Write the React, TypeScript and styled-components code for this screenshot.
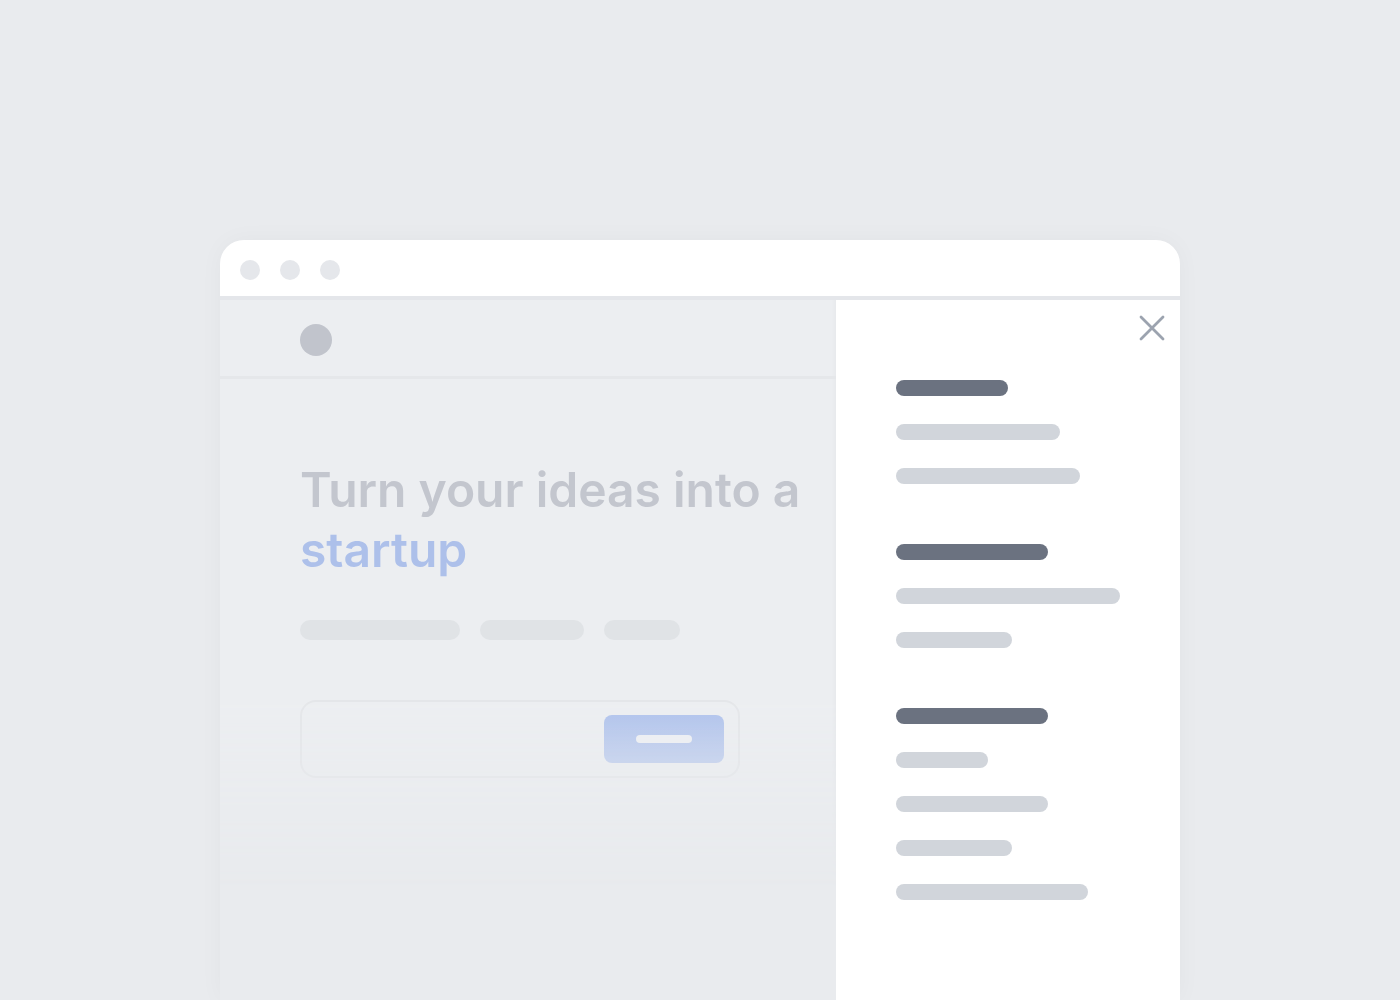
import React from 'react';
import styled, { createGlobalStyle } from 'styled-components';

const GlobalStyle = createGlobalStyle`
  html, body {
    margin: 0;
    padding: 0;
    background: #e9ebee;
    font-family: Inter, "Noto Sans", sans-serif;
    overflow: hidden;
  }
`;

const Page = styled.div`
  width: 1400px;
  height: 1000px;
  display: flex;
  justify-content: center;
  padding-top: 240px;
  box-sizing: border-box;
  overflow: hidden;
`;

const Window = styled.div`
  width: 960px;
  height: 760px;
  display: flex;
  flex-direction: column;
  border-radius: 24px 24px 0 0;
  box-shadow: 0 0 24px rgba(30, 40, 60, 0.035);
`;

const TitleBar = styled.div`
  height: 60px;
  box-sizing: border-box;
  flex-shrink: 0;
  background: #ffffff;
  border-radius: 24px 24px 0 0;
  border-bottom: 4px solid #e4e6ea;
  display: flex;
  align-items: center;
  gap: 20px;
  padding: 4px 0 0 20px;
`;

const Dot = styled.span`
  width: 20px;
  height: 20px;
  border-radius: 50%;
  background: #e5e7eb;
`;

const Body = styled.div`
  flex: 1;
  display: flex;
`;

const Main = styled.div`
  width: 616px;
  background: #eceef1;
  display: flex;
  flex-direction: column;
  -webkit-mask-image: linear-gradient(to bottom, #000 0, #000 400px, rgba(0, 0, 0, 0.35) 520px, transparent 590px);
  mask-image: linear-gradient(to bottom, #000 0, #000 400px, rgba(0, 0, 0, 0.35) 520px, transparent 590px);
  box-shadow: inset -4px 0 4px -3px rgba(0, 0, 0, 0.03);
`;

const Header = styled.div`
  height: 79px;
  box-sizing: border-box;
  border-bottom: 3px solid #e5e7ea;
  display: flex;
  align-items: center;
  padding: 4px 0 0 80px;
  flex-shrink: 0;
`;

const Avatar = styled.span`
  width: 32px;
  height: 32px;
  border-radius: 50%;
  background: #c1c4cc;
`;

const Hero = styled.div`
  padding: 81px 0 0 80px;
  display: flex;
  flex-direction: column;
`;

const Headline = styled.h1`
  margin: 0;
  font-size: 48px;
  line-height: 60px;
  font-weight: 600;
  letter-spacing: 0;
  color: #c3c6ce;
  white-space: nowrap;
`;

const Accent = styled.span`
  color: #adc0ea;
`;

const PillRow = styled.div`
  display: flex;
  gap: 20px;
  margin-top: 40px;
`;

const Pill = styled.span<{ $w: number }>`
  width: ${p => p.$w}px;
  height: 20px;
  border-radius: 10px;
  background: #e0e3e6;
`;

const InputBox = styled.div`
  margin-top: 60px;
  width: 440px;
  height: 78px;
  box-sizing: border-box;
  border: 2px solid #e4e6e9;
  border-radius: 16px;
  display: flex;
  align-items: center;
  justify-content: flex-end;
  padding-right: 14px;
`;

const SubmitButton = styled.div`
  width: 120px;
  height: 48px;
  border-radius: 8px;
  background: linear-gradient(to bottom, #afc2ec, #bacaed);
  display: flex;
  align-items: center;
  justify-content: center;
`;

const ButtonLabel = styled.span`
  width: 56px;
  height: 8px;
  border-radius: 4px;
  background: #eef0f4;
`;

const Drawer = styled.div`
  position: relative;
  width: 344px;
  background: #ffffff;
  padding: 80px 0 0 60px;
  box-sizing: border-box;
  display: flex;
  flex-direction: column;
  gap: 60px;
`;

const CloseButton = styled.button`
  position: absolute;
  top: 14px;
  right: 14px;
  width: 28px;
  height: 28px;
  padding: 0;
  border: none;
  background: none;
  display: flex;
  align-items: center;
  justify-content: center;
`;

const Group = styled.div`
  display: flex;
  flex-direction: column;
  gap: 28px;
`;

const Bar = styled.span<{ $w: number; $dark?: boolean }>`
  width: ${p => p.$w}px;
  height: 16px;
  border-radius: 8px;
  background: ${p => (p.$dark ? '#6b7280' : '#d1d5db')};
`;

const groups: { title: number; items: number[] }[] = [
  { title: 112, items: [164, 184] },
  { title: 152, items: [224, 116] },
  { title: 152, items: [92, 152, 116, 192] },
];

export default function App() {
  return (
    <>
      <GlobalStyle />
      <Page>
        <Window>
          <TitleBar>
            <Dot />
            <Dot />
            <Dot />
          </TitleBar>
          <Body>
            <Main>
              <Header>
                <Avatar />
              </Header>
              <Hero>
                <Headline>
                  Turn your ideas into a
                  <br />
                  <Accent>startup</Accent>
                </Headline>
                <PillRow>
                  <Pill $w={160} />
                  <Pill $w={104} />
                  <Pill $w={76} />
                </PillRow>
                <InputBox>
                  <SubmitButton>
                    <ButtonLabel />
                  </SubmitButton>
                </InputBox>
              </Hero>
            </Main>
            <Drawer>
              <CloseButton aria-label="Close">
                <svg width="26" height="26" viewBox="0 0 26 26" fill="none">
                  <path d="M2 2L24 24M24 2L2 24" stroke="#9ca3af" strokeWidth="2.8" strokeLinecap="round" />
                </svg>
              </CloseButton>
              {groups.map((g, i) => (
                <Group key={i}>
                  <Bar $w={g.title} $dark />
                  {g.items.map((w, j) => (
                    <Bar key={j} $w={w} />
                  ))}
                </Group>
              ))}
            </Drawer>
          </Body>
        </Window>
      </Page>
    </>
  );
}
